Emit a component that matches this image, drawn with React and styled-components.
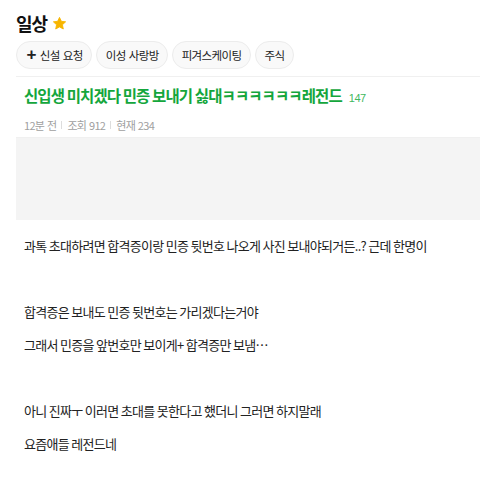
import React from "react";
import styled, { createGlobalStyle } from "styled-components";

const GlobalStyle = createGlobalStyle`
    html, body {
        margin: 0;
        padding: 0;
        background: #fff;
        overflow: hidden;
    }
    body {
        font-family: "Noto Sans CJK KR", "Noto Sans", sans-serif;
        color: #222;
    }
`;

const tags = ["이성 사랑방", "피겨스케이팅", "주식"];

const paragraphs = [
    "과톡 초대하려면 합격증이랑 민증 뒷번호 나오게 사진 보내야되거든..? 근데 한명이",
    "",
    "합격증은 보내도 민증 뒷번호는 가리겠다는거야",
    "그래서 민증을 앞번호만 보이게+ 합격증만 보냄…",
    "",
    "아니 진짜ㅜ 이러면 초대를 못한다고 했더니 그러면 하지말래",
    "요즘애들 레전드네",
];

const Star = () => (
    <svg width="15" height="15" viewBox="0 0 24 24">
        <path
            d="M12 2.2l2.95 6.3 6.85.8-5.08 4.7 1.35 6.8L12 17.4l-6.07 3.4 1.35-6.8L2.2 9.3l6.85-.8z"
            fill="#f7b500"
            stroke="#f7b500"
            strokeWidth="1.4"
            strokeLinejoin="round"
        />
    </svg>
);

const App = () => {
    return (
        <Page>
            <GlobalStyle />
            <BoardHeader>
                <BoardTitle>일상</BoardTitle>
                <Star />
            </BoardHeader>
            <ChipRow>
                <Chip>
                    <Plus>+</Plus>신설 요청
                </Chip>
                {tags.map((t) => (
                    <Chip key={t}>{t}</Chip>
                ))}
            </ChipRow>
            <Post>
                <PostHead>
                    <PostTitle>
                        신입생 미치겠다 민증 보내기 싫대ㅋㅋㅋㅋㅋㅋ레전드
                        <Count>147</Count>
                    </PostTitle>
                    <Meta>
                        <span>12분 전</span>
                        <Sep />
                        <span>조회 912</span>
                        <Sep />
                        <span>현재 234</span>
                    </Meta>
                </PostHead>
                <Banner />
                <Body>
                    {paragraphs.map((p, i) => (
                        <Para key={i}>{p || <br />}</Para>
                    ))}
                </Body>
            </Post>
        </Page>
    );
};

const Page = styled.div`
    padding: 12px 0 0 16px;
    width: 464px;
`;

const BoardHeader = styled.div`
    display: flex;
    align-items: center;
    gap: 5px;
    height: 22px;
`;

const BoardTitle = styled.h1`
    margin: 0;
    font-size: 18px;
    font-weight: 700;
    color: #111;
    letter-spacing: -1px;
`;

const ChipRow = styled.div`
    display: flex;
    gap: 4px;
    margin-top: 7px;
    padding-bottom: 7px;
    border-bottom: 1px solid #f0f0f0;
`;

const Chip = styled.div`
    display: flex;
    align-items: center;
    height: 28px;
    box-sizing: border-box;
    padding: 0 8.5px;
    border: 1px solid #ececec;
    border-radius: 14px;
    background: #f9f9f9;
    font-size: 11.5px;
    letter-spacing: -0.6px;
    word-spacing: 1px;
    color: #222;
    white-space: nowrap;
`;

const Plus = styled.span`
    font-size: 17px;
    font-weight: 700;
    margin: 0 4px 1px 1px;
    line-height: 1;
    font-family: "Liberation Sans", sans-serif;
`;

const Post = styled.article``;

const PostHead = styled.div`
    padding: 8px 8px 0;
    height: 52px;
    border-bottom: 1px solid #f0f0f0;
`;

const PostTitle = styled.h2`
    margin: 0;
    font-size: 15.5px;
    font-weight: 700;
    color: #14a63c;
    line-height: 20px;
    letter-spacing: -0.9px;
`;

const Count = styled.span`
    font-family: "Liberation Sans", sans-serif;
    font-size: 11px;
    font-weight: 400;
    color: #3fb860;
    margin-left: 7px;
    letter-spacing: -0.5px;
`;

const Meta = styled.div`
    display: flex;
    align-items: center;
    gap: 5px;
    margin-top: 9px;
    font-size: 11px;
    color: #a0a0a0;
    letter-spacing: -0.7px;
    word-spacing: 1px;
`;

const Sep = styled.i`
    display: block;
    width: 1px;
    height: 8px;
    background: #ddd;
`;

const Banner = styled.div`
    height: 82px;
    background: #f4f4f4;
`;

const Body = styled.div`
    padding: 16px 8px 0;
`;

const Para = styled.p`
    margin: 0 0 13.5px;
    font-size: 13px;
    line-height: 19.5px;
    letter-spacing: -0.7px;
    color: #222;
`;

export default App;
